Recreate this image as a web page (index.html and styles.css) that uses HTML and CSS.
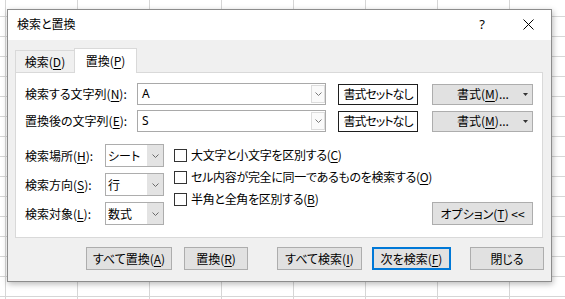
FILE: index.html
```html
<!DOCTYPE html>
<html lang="ja">
<head>
<meta charset="utf-8">
<title>検索と置換</title>
<link rel="stylesheet" href="styles.css">
</head>
<body>
<div class="dialog">
  <div class="titlebar">
    <span class="title">検索と置換</span>
    <span class="tb-btn help">?</span>
    <span class="tb-btn close"><svg width="11" height="11" viewBox="0 0 11 11"><path d="M0.5 0.5 L10.5 10.5 M10.5 0.5 L0.5 10.5" stroke="#000" stroke-width="1" fill="none"/></svg></span>
  </div>
  <div class="body">
    <div class="tabs">
      <div class="tab">検索(<u>D</u>)</div>
      <div class="tab active">置換(<u>P</u>)</div>
    </div>
    <div class="panel">
      <div class="row">
        <span class="lbl">検索する文字列(<u>N</u>):</span>
        <div class="combo"><span class="combo-text">A</span><span class="combo-btn"><svg width="7" height="4" viewBox="0 0 7 4"><path d="M0.5 0.5 L3.5 3.5 L6.5 0.5" stroke="#7a7a7a" fill="none"/></svg></span></div>
        <button class="btn-none">書式セットなし</button>
        <button class="btn btn-fmt"><span class="fmt-text">書式(<u>M</u>)...</span><svg class="caret" width="5" height="3" viewBox="0 0 5 3"><path d="M0 0 H5 L2.5 3 Z" fill="#333"/></svg></button>
      </div>
      <div class="row">
        <span class="lbl">置換後の文字列(<u>E</u>):</span>
        <div class="combo"><span class="combo-text">S</span><span class="combo-btn"><svg width="7" height="4" viewBox="0 0 7 4"><path d="M0.5 0.5 L3.5 3.5 L6.5 0.5" stroke="#7a7a7a" fill="none"/></svg></span></div>
        <button class="btn-none">書式セットなし</button>
        <button class="btn btn-fmt"><span class="fmt-text">書式(<u>M</u>)...</span><svg class="caret" width="5" height="3" viewBox="0 0 5 3"><path d="M0 0 H5 L2.5 3 Z" fill="#333"/></svg></button>
      </div>
      <div class="lower">
        <div class="search-opts">
          <span class="lbl2">検索場所(<u>H</u>):</span>
          <div class="select"><span class="select-text">シート</span><span class="select-btn"><svg width="7" height="4" viewBox="0 0 7 4"><path d="M0.5 0.5 L3.5 3.5 L6.5 0.5" stroke="#6a6a6a" fill="none"/></svg></span></div>
          <span class="lbl2">検索方向(<u>S</u>):</span>
          <div class="select"><span class="select-text">行</span><span class="select-btn"><svg width="7" height="4" viewBox="0 0 7 4"><path d="M0.5 0.5 L3.5 3.5 L6.5 0.5" stroke="#6a6a6a" fill="none"/></svg></span></div>
          <span class="lbl2">検索対象(<u>L</u>):</span>
          <div class="select"><span class="select-text">数式</span><span class="select-btn"><svg width="7" height="4" viewBox="0 0 7 4"><path d="M0.5 0.5 L3.5 3.5 L6.5 0.5" stroke="#6a6a6a" fill="none"/></svg></span></div>
        </div>
        <div class="checks">
          <div class="check"><span class="cb"></span>大文字と小文字を区別する(<u>C</u>)</div>
          <div class="check"><span class="cb"></span>セル内容が完全に同一であるものを検索する(<u>O</u>)</div>
          <div class="check"><span class="cb"></span>半角と全角を区別する(<u>B</u>)</div>
        </div>
        <button class="btn btn-opt">オプション(<u>T</u>) &lt;&lt;</button>
      </div>
    </div>
    <div class="footer">
      <button class="btn b-all-rep">すべて置換(<u>A</u>)</button>
      <button class="btn b-rep">置換(<u>R</u>)</button>
      <button class="btn b-all-find">すべて検索(<u>I</u>)</button>
      <button class="btn b-next">次を検索(<u>F</u>)</button>
      <button class="btn b-close">閉じる</button>
    </div>
  </div>
</div>
</body>
</html>
```
FILE: styles.css
```css
* { box-sizing: border-box; }
html, body { margin: 0; }
body {
  width: 565px;
  height: 299px;
  overflow: hidden;
  padding: 9px 0 0 7px;
  background-color: #fff;
  background-image:
    linear-gradient(to right, #d6d6d6 1px, transparent 1px),
    linear-gradient(to bottom, #d6d6d6 1px, transparent 1px);
  background-size: 72px 20px, 72px 20px;
  background-position: 5px 0, 0 16px;
  font-family: "Noto Sans CJK JP", sans-serif;
  font-size: 12px;
  font-feature-settings: "palt";
  color: #000;
}
u { text-underline-offset: 2px; }

.dialog {
  width: 545px;
  height: 273px;
  border: 1px solid #8c8c8c;
  background: #f0f0f0;
  box-shadow: 1px 2px 6px rgba(0,0,0,0.28);
  display: flex;
  flex-direction: column;
}
.titlebar {
  height: 30px;
  background: #fff;
  display: flex;
  align-items: center;
}
.title {
  flex: 1;
  padding-left: 9px;
  padding-bottom: 2px;
  line-height: 16px;
}
.tb-btn {
  width: 46px;
  height: 30px;
  display: flex;
  align-items: center;
  justify-content: center;
  padding-bottom: 2px;
}
.help { font-family: "Noto Sans", sans-serif; font-size: 13px; }

.body {
  flex: 1;
  padding: 8px 8px 0 7px;
  display: flex;
  flex-direction: column;
}
.tabs {
  display: flex;
  align-items: flex-end;
  height: 25px;
}
.tab {
  width: 59px;
  height: 22px;
  margin-bottom: 1px;
  border: 1px solid #d9d9d9;
  border-bottom: none;
  border-right: none;
  display: flex;
  align-items: center;
  justify-content: center;
  line-height: 16px;
}
.tab.active {
  position: relative;
  width: 63px;
  height: 25px;
  margin-bottom: 0;
  border-right: 1px solid #d9d9d9;
  background: #fff;
  padding-bottom: 1px;
}
.panel {
  margin-top: -1px;
  height: 166px;
  background: #fff;
  border: 1px solid #d9d9d9;
  padding: 10px 9px 0 9px;
}
.row {
  display: flex;
  align-items: center;
  height: 22px;
}
.row + .row { margin-top: 5px; }
.lbl { width: 112px; line-height: 16px; }
.combo {
  width: 189px;
  height: 22px;
  border: 1px solid #a9a9a9;
  display: flex;
}
.combo-text {
  flex: 1;
  padding-left: 4px;
  font-family: "Noto Sans", sans-serif;
  line-height: 20px;
}
.combo-btn {
  width: 14px;
  margin: 1px 0 1px 0;
  border: 1px solid #dcdcdc;
  background: #fafafa;
  display: flex;
  align-items: center;
  justify-content: center;
}
button {
  font: inherit;
  font-feature-settings: "palt";
  color: #000;
  padding: 0;
  display: flex;
  align-items: center;
  justify-content: center;
  line-height: 16px;
  white-space: nowrap;
}
.btn {
  height: 23px;
  background: #e1e1e1;
  border: 1px solid #adadad;
}
.btn-none {
  margin-left: 12px;
  width: 80px;
  height: 21px;
  background: #fff;
  border: 1px solid #1e1e1e;
  letter-spacing: -1px;
}
.btn-fmt {
  margin-left: 14px;
  width: 101px;
  height: 21px;
  padding-right: 4px;
}
.fmt-text { flex: 1; text-align: center; padding-left: 10px; }

.lower {
  display: flex;
  margin-top: 12px;
  height: 81px;
}
.search-opts {
  display: grid;
  grid-template-columns: 80px 59px;
  grid-auto-rows: 23px;
  row-gap: 6px;
  align-items: center;
  flex: none;
}
.lbl2 { line-height: 16px; }
.select {
  height: 23px;
  display: flex;
  border: 1px solid #adadad;
  background: #fff;
}
.select-text { flex: 1; padding-left: 2px; line-height: 21px; }
.select-btn {
  width: 16px;
  background: #e3e3e3;
  display: flex;
  align-items: center;
  justify-content: center;
}
.checks {
  flex: none;
  margin-left: 10px;
  display: flex;
  flex-direction: column;
  white-space: nowrap;
  letter-spacing: -0.3px;
}
.check {
  height: 22px;
  display: flex;
  align-items: center;
  line-height: 16px;
}
.cb {
  width: 13px;
  height: 13px;
  border: 1px solid #333;
  background: #fff;
  margin-right: 4px;
  flex: none;
}
.btn-opt {
  flex: none;
  margin-left: auto;
  align-self: flex-end;
  width: 101px;
}

.footer {
  display: flex;
  justify-content: flex-end;
  margin-top: 9px;
  margin-right: -1px;
}
.b-all-rep { width: 86px; }
.b-rep { width: 64px; margin-left: 12px; }
.b-all-find { width: 85px; margin-left: 29px; }
.b-next { width: 79px; margin-left: 10px; border: 2px solid #0078d7; }
.b-close { width: 74px; margin-left: 19px; }
```
